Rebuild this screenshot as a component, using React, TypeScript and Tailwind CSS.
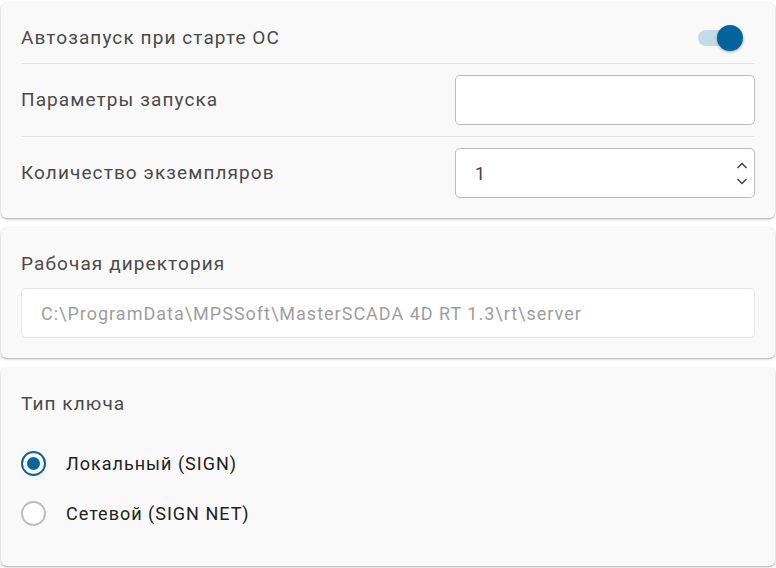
import React from "react";

const font = { fontFamily: "Roboto, 'Noto Sans', sans-serif" };

function Card({ className, children }: { className?: string; children: React.ReactNode }) {
  return (
    <div
      className={
        "mx-[1px] rounded-[6px] bg-[#f9f9f9] px-[20px] shadow-[0_1px_3px_rgba(0,0,0,0.25),0_1px_1px_rgba(0,0,0,0.12)] " +
        (className ?? "")
      }
    >
      {children}
    </div>
  );
}

const label = "text-[19px] leading-[24px] tracking-[1.1px] text-[#4a4a4a]";

export default function App() {
  return (
    <div className="h-[568px] w-[776px] overflow-hidden bg-white pt-[3px]" style={font}>
      <Card className="pb-[9px] pt-[10px]">
        <div className="flex h-[50px] items-center justify-between">
          <span className={label}>Автозапуск при старте ОС</span>
          <div className="relative mr-[17px] h-[16px] w-[40px] rounded-full bg-[#c3dbe7]">
            <div className="absolute right-[-5px] top-[-5px] h-[26px] w-[26px] rounded-full bg-[#03649b] shadow-[0_1px_3px_rgba(0,0,0,0.35)]" />
          </div>
        </div>
        <div className="h-px bg-[#e3e3e3]" />
        <div className="flex h-[72px] items-center justify-between">
          <span className={label}>Параметры запуска</span>
          <div className="h-[50px] w-[300px] rounded-[5px] border border-[#bdbdbd] bg-white" />
        </div>
        <div className="h-px bg-[#e3e3e3]" />
        <div className="flex h-[72px] items-center justify-between">
          <span className={label}>Количество экземпляров</span>
          <div className="flex h-[50px] w-[300px] items-center justify-between rounded-[5px] border border-[#bdbdbd] bg-white pl-[19px] pr-[6px]">
            <span className="text-[18px] text-[#424242]">1</span>
            <div className="flex flex-col items-center gap-[9px]">
              <svg width="12" height="7" viewBox="0 0 12 7">
                <path d="M1.5 6 L6 1.5 L10.5 6" fill="none" stroke="#424242" strokeWidth="1.5" />
              </svg>
              <svg width="12" height="7" viewBox="0 0 12 7">
                <path d="M1.5 1 L6 5.5 L10.5 1" fill="none" stroke="#424242" strokeWidth="1.5" />
              </svg>
            </div>
          </div>
        </div>
      </Card>

      <Card className="mt-[10px] pb-[20px] pt-[24px]">
        <div className={label}>Рабочая директория</div>
        <div className="mt-[12px] flex h-[50px] items-center rounded-[5px] border border-[#e6e6e6] bg-white pl-[19px]">
          <span className="text-[18px] tracking-[1px] text-[#9e9e9e]">C:\ProgramData\MPSSoft\MasterSCADA 4D RT 1.3\rt\server</span>
        </div>
      </Card>

      <Card className="mt-[10px] pb-[28px] pt-[24px]">
        <div className={label}>Тип ключа</div>
        <div className="mt-[22px]">
          <div className="flex h-[50px] items-center">
            <div className="flex h-[25px] w-[25px] items-center justify-center rounded-full border-2 border-[#0a6399]">
              <div className="h-[13px] w-[13px] rounded-full bg-[#0a6399]" />
            </div>
            <span className="ml-[20px] text-[18px] tracking-[1px] text-[#212121]">Локальный (SIGN)</span>
          </div>
          <div className="flex h-[50px] items-center">
            <div className="h-[25px] w-[25px] rounded-full border-2 border-[#bdbdbd] bg-white" />
            <span className="ml-[20px] text-[18px] tracking-[1px] text-[#212121]">Сетевой (SIGN NET)</span>
          </div>
        </div>
      </Card>
    </div>
  );
}
